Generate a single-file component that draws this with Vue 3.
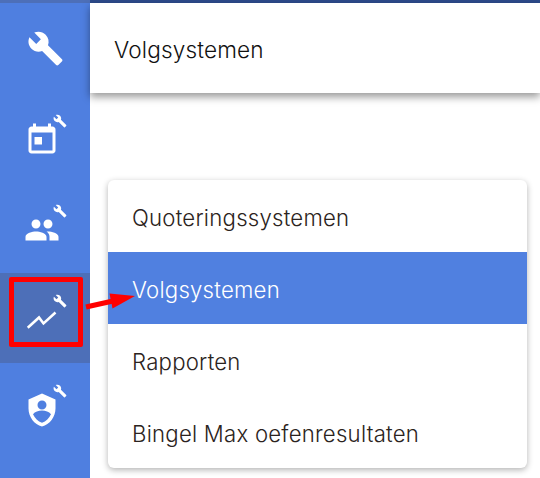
<template>
  <div class="page">
    <!-- Sidebar -->
    <nav class="sidebar">
      <div class="strip"></div>
      <div
        v-for="item in sideItems"
        :key="item.name"
        class="side-item"
        :class="{ active: item.active }"
      >
        <svg class="side-icon" :class="{ big: item.name === 'tools' }" viewBox="0 0 24 24">
          <path v-if="item.name === 'chart'" d="M2.5 17.2l7.5-6.9 3 4L21 7" fill="none" stroke="#fff" stroke-width="1.7" />
          <path v-else :d="item.path" fill="#fff" fill-rule="evenodd" />
        </svg>
        <svg v-if="item.name !== 'tools'" class="mini-wrench" viewBox="0 0 24 24">
          <path :d="wrench" fill="#fff" />
        </svg>
      </div>
    </nav>

    <!-- Content -->
    <main class="content">
      <div class="topline"></div>
      <header class="header">Volgsystemen</header>
      <ul class="menu">
        <li
          v-for="entry in menuItems"
          :key="entry"
          :class="{ selected: entry === 'Volgsystemen' }"
        >
          {{ entry }}
        </li>
      </ul>
    </main>

    <!-- Annotation drawn over the screenshot -->
    <div class="red-box"></div>
    <svg class="red-arrow" width="60" height="24" viewBox="0 0 60 24">
      <path d="M1 18L28 12" stroke="#f00" stroke-width="5" />
      <path d="M24.5 4.5L50 7L27.5 19.5z" fill="#f00" />
    </svg>
  </div>
</template>

<script setup>
const wrench =
  'M22.7 19l-9.1-9.1c.9-2.3.4-5-1.5-6.9-2-2-5-2.4-7.4-1.3L9 6 6 9 1.6 4.7C.4 7.1.9 10.1 2.9 12.1c1.9 1.9 4.6 2.4 6.9 1.5l9.1 9.1c.4.4 1 .4 1.4 0l2.3-2.3c.5-.4.5-1.1.1-1.4z'

const sideItems = [
  { name: 'tools', path: wrench },
  {
    name: 'calendar',
    path: 'M7 10h5v5H7zM16 1v2H8V1H6v2H5c-1.11 0-1.99.9-1.99 2L3 19c0 1.1.89 2 2 2h14c1.1 0 2-.9 2-2V5c0-1.1-.9-2-2-2h-1V1h-2zm3 18H5V7h14v12z',
  },
  {
    name: 'people',
    path: 'M16 11c1.66 0 2.99-1.34 2.99-3S17.66 5 16 5c-1.66 0-3 1.34-3 3s1.34 3 3 3zm-8 0c1.66 0 2.99-1.34 2.99-3S9.66 5 8 5C6.34 5 5 6.34 5 8s1.34 3 3 3zm0 2c-2.33 0-7 1.17-7 3.5V19h14v-2.5c0-2.33-4.67-3.5-7-3.5zm8 0c-.29 0-.62.02-.97.05 1.16.84 1.97 1.97 1.97 3.45V19h6v-2.5c0-2.33-4.67-3.5-7-3.5z',
  },
  { name: 'chart', active: true },
  {
    name: 'shield',
    path: 'M12 1L3 5v6c0 5.55 3.84 10.74 9 12 5.16-1.26 9-6.45 9-12V5l-9-4zm0 4.7a3 3 0 1 1 0 6 3 3 0 0 1 0-6zM6 14.8c1.3-1.5 3.6-2.4 6-2.4s4.7.9 6 2.4c-1.2 2.7-3.3 4.7-6 5.7-2.7-1-4.8-3-6-5.7z',
  },
]

const menuItems = [
  'Quoteringssystemen',
  'Volgsystemen',
  'Rapporten',
  'Bingel Max oefenresultaten',
]
</script>

<style scoped>
.page {
  position: relative;
  display: flex;
  width: 540px;
  height: 478px;
  overflow: hidden;
  background: #fff;
  font-family: "Inter", "Liberation Sans", sans-serif;
}

.sidebar {
  display: flex;
  flex-direction: column;
  flex: 0 0 90px;
  background: #4f7fe0;
}

.strip {
  height: 3px;
  background: #4d6fb8;
}

.side-item {
  position: relative;
  display: flex;
  align-items: center;
  justify-content: center;
  height: 90px;
}

.side-item.active {
  background: #4d6fb8;
}

.side-icon {
  width: 36px;
  height: 36px;
  margin: 3px 0 0 -7px;
}

.side-icon.big {
  width: 37px;
  height: 37px;
  margin: 0;
}

.mini-wrench {
  position: absolute;
  top: 21px;
  left: 53px;
  width: 14px;
  height: 14px;
}

.content {
  flex: 1;
  min-width: 0;
}

.topline {
  height: 3px;
  background: #2c4a8a;
}

.header {
  display: flex;
  align-items: center;
  box-sizing: border-box;
  height: 90px;
  padding: 2px 0 0 24px;
  font-size: 22.6px;
  font-weight: 300;
  letter-spacing: 0.15px;
  color: #111;
  background: #fff;
  box-shadow: 0 4px 8px rgba(0, 0, 0, 0.4);
}

.menu {
  list-style: none;
  margin: 87px 13px 0 18px;
  padding: 0;
  border-radius: 6px;
  background: #fff;
  overflow: hidden;
  box-shadow: 0 2px 6px rgba(0, 0, 0, 0.3);
}

.menu li {
  display: flex;
  align-items: center;
  box-sizing: border-box;
  height: 72px;
  padding: 2px 0 0 24px;
  font-size: 22.2px;
  font-weight: 350;
  letter-spacing: 0.22px;
  color: #2b2320;
}

.menu li.selected {
  background: #5080e0;
  color: #fff;
}

.red-box {
  position: absolute;
  top: 277px;
  left: 9px;
  width: 74px;
  height: 70px;
  box-sizing: border-box;
  border: 5px solid #f00;
  border-radius: 2px;
}

.red-arrow {
  position: absolute;
  top: 289px;
  left: 85px;
}
</style>
